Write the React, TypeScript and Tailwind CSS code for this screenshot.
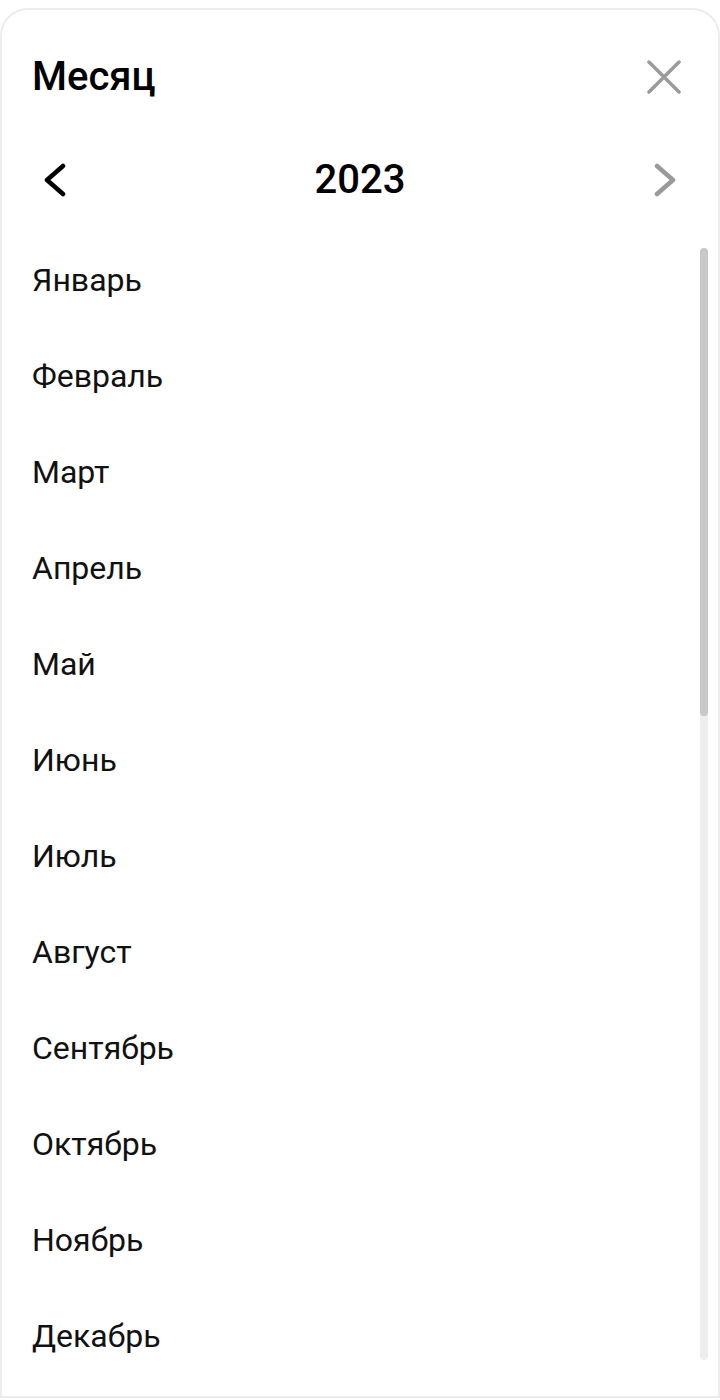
import React from "react";

const months = [
  "Январь",
  "Февраль",
  "Март",
  "Апрель",
  "Май",
  "Июнь",
  "Июль",
  "Август",
  "Сентябрь",
  "Октябрь",
  "Ноябрь",
  "Декабрь",
];

function CloseIcon() {
  return (
    <svg width="34" height="34" viewBox="0 0 34 34" fill="none">
      <path
        d="M2 2L32 32M32 2L2 32"
        stroke="#9a9a9a"
        strokeWidth="3.5"
        strokeLinecap="round"
      />
    </svg>
  );
}

function Chevron({ dir, color }: { dir: "left" | "right"; color: string }) {
  const d = dir === "left" ? "M20 3L4 17L20 31" : "M4 3L20 17L4 31";
  return (
    <svg width="24" height="34" viewBox="0 0 24 34" fill="none">
      <path
        d={d}
        stroke={color}
        strokeWidth="4.5"
        strokeLinecap="round"
        strokeLinejoin="round"
      />
    </svg>
  );
}

export default function App() {
  return (
    <div
      className="min-h-[1400px] w-[720px] bg-white pt-2"
      style={{ fontFamily: "Roboto, 'Noto Sans', sans-serif" }}
    >
      <div className="flex h-[1390px] flex-col rounded-t-[28px] border-2 border-[#ececec] bg-white">
        {/* title */}
        <div className="mt-[27px] flex h-20 items-center justify-between pl-[30px] pr-[37px]">
          <h1 className="text-[40px] font-medium leading-none text-black">Месяц</h1>
          <CloseIcon />
        </div>

        {/* year switcher */}
        <div className="mt-[15px] flex h-24 items-center justify-between pl-[41px] pr-[41px]">
          <Chevron dir="left" color="#000000" />
          <span className="text-[40px] font-medium leading-none text-black">2023</span>
          <Chevron dir="right" color="#9a9a9a" />
        </div>

        {/* month list */}
        <div className="mt-1 flex flex-1">
          <ul className="flex-1 pl-[30px]">
            {months.map((m) => (
              <li key={m} className="flex h-24 items-center text-[32px] text-[#111111]">
                {m}
              </li>
            ))}
          </ul>
          <div className="mr-[10px] mt-4 h-[1112px] w-2 rounded-full bg-[#eeeeee]">
            <div className="h-[468px] w-2 rounded-full bg-[#c8c8c8]" />
          </div>
        </div>
      </div>
    </div>
  );
}
